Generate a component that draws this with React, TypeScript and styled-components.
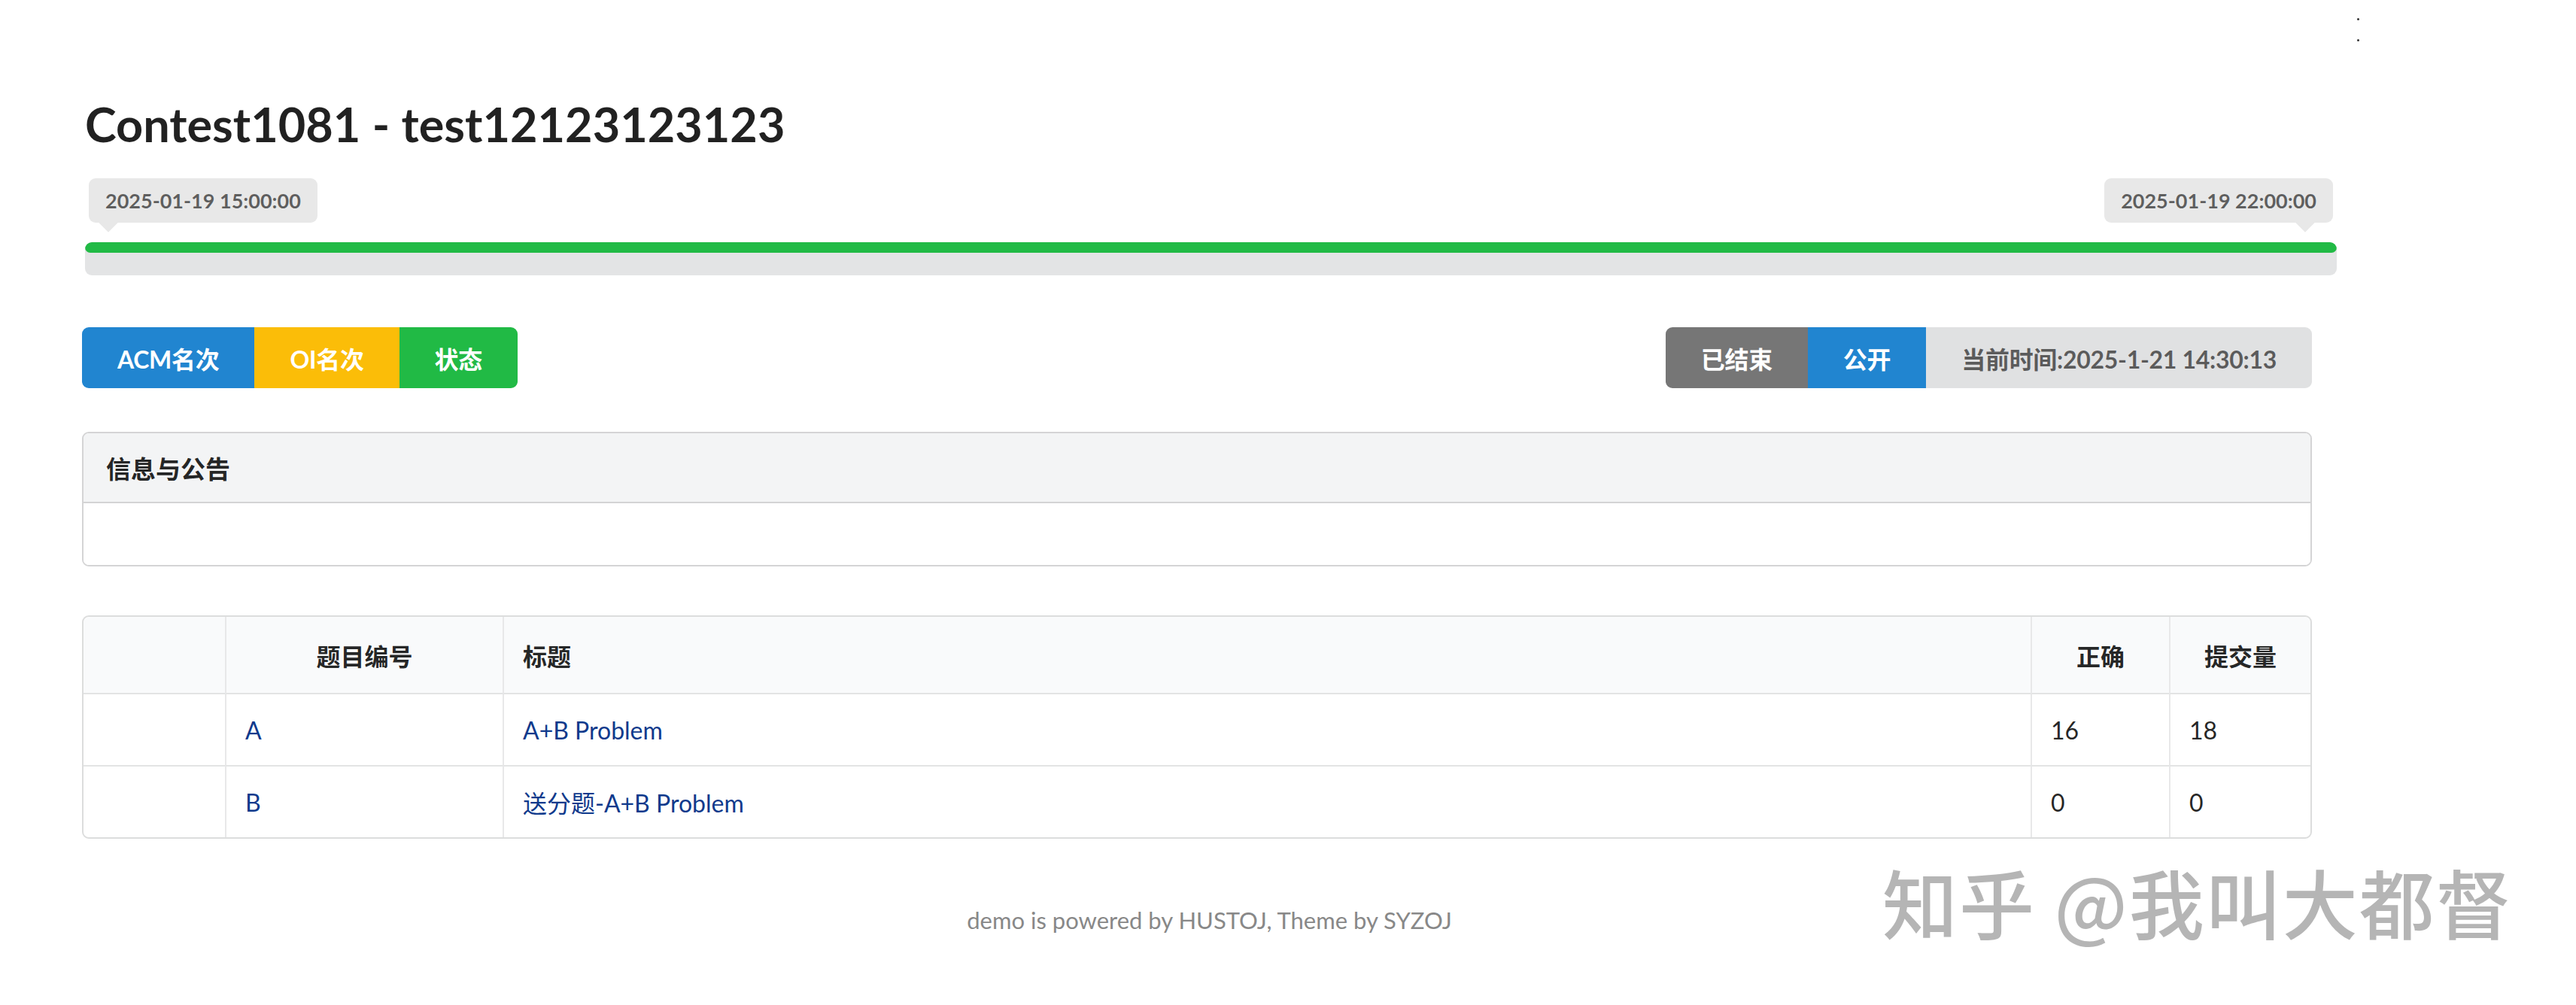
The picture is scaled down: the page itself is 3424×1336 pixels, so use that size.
import styled, { createGlobalStyle } from 'styled-components';

const GlobalStyle = createGlobalStyle`
    html, body {
        margin: 0;
        padding: 0;
        background: #ffffff;
    }

    body {
        font-family: Lato, 'Noto Sans CJK SC', 'Noto Sans', sans-serif;
        font-size: 32px;
        color: rgba(0, 0, 0, 0.87);
    }
`;

type Problem = {
    id: string;
    title: string;
    accepted: number;
    submitted: number;
};

const problems: Problem[] = [
    { id: 'A', title: 'A+B Problem', accepted: 16, submitted: 18 },
    { id: 'B', title: '送分题-A+B Problem', accepted: 0, submitted: 0 },
];

const COLORS = {
    blue: '#2185d0',
    yellow: '#fbbd08',
    green: '#21ba45',
    grey: '#767676',
    light: '#e0e1e2',
};

function App(): JSX.Element {
    return (
        <Page>
            <GlobalStyle />
            <Main>
                <Title>Contest1081 - test12123123123</Title>

                <TimeRow>
                    <TimeLabel $arrow="left">2025-01-19 15:00:00</TimeLabel>
                    <TimeLabel $arrow="right">2025-01-19 22:00:00</TimeLabel>
                </TimeRow>

                <Progress>
                    <ProgressBar style={{ width: '100%' }} />
                </Progress>

                <Toolbar>
                    <ButtonGroup>
                        <Button $color={COLORS.blue}>ACM名次</Button>
                        <Button $color={COLORS.yellow}>OI名次</Button>
                        <Button $color={COLORS.green}>状态</Button>
                    </ButtonGroup>
                    <ButtonGroup>
                        <Button $color={COLORS.grey}>已结束</Button>
                        <Button $color={COLORS.blue}>公开</Button>
                        <Button $color={COLORS.light} $dark>
                            当前时间:2025-1-21 14:30:13
                        </Button>
                    </ButtonGroup>
                </Toolbar>

                <Segment>
                    <SegmentHeader>信息与公告</SegmentHeader>
                    <SegmentBody />
                </Segment>

                <Table>
                    <colgroup>
                        <col style={{ width: 188 }} />
                        <col style={{ width: 369 }} />
                        <col />
                        <col style={{ width: 184 }} />
                        <col style={{ width: 188 }} />
                    </colgroup>
                    <thead>
                        <tr>
                            <Th />
                            <Th $center>题目编号</Th>
                            <Th>标题</Th>
                            <Th $center>正确</Th>
                            <Th $center>提交量</Th>
                        </tr>
                    </thead>
                    <tbody>
                        {problems.map((problem) => (
                            <tr key={problem.id}>
                                <Td />
                                <Td>
                                    <ProblemLink href="#">{problem.id}</ProblemLink>
                                </Td>
                                <Td>
                                    <ProblemLink href="#">{problem.title}</ProblemLink>
                                </Td>
                                <Td>{problem.accepted}</Td>
                                <Td>{problem.submitted}</Td>
                            </tr>
                        ))}
                    </tbody>
                </Table>

                <Footer>demo is powered by HUSTOJ, Theme by SYZOJ</Footer>
            </Main>

            <Dots>
                <span />
                <span />
            </Dots>
            <Watermark>知乎 @我叫大都督</Watermark>
        </Page>
    );
}

export default App;

const Page = styled.div`
    position: relative;
    width: 3424px;
    min-height: 1336px;
    overflow: hidden;
`;

const Main = styled.div`
    width: 2997px;
    margin-left: 109px;
    padding-top: 124px;
    display: flex;
    flex-direction: column;
`;

const Title = styled.h1`
    margin: 0 0 0 4px;
    font-size: 63px;
    font-weight: 700;
    line-height: 82px;
    color: rgba(0, 0, 0, 0.87);
`;

const TimeRow = styled.div`
    display: flex;
    justify-content: space-between;
    align-items: flex-start;
    margin: 31px 5px 0 9px;
`;

const TimeLabel = styled.div<{ $arrow: 'left' | 'right' }>`
    position: relative;
    box-sizing: border-box;
    height: 59px;
    padding: 0 22px;
    display: flex;
    align-items: center;
    background: #e8e8e8;
    border-radius: 9px;
    color: rgba(0, 0, 0, 0.6);
    font-size: 27px;
    font-weight: 700;
    line-height: 1;

    &::after {
        content: '';
        position: absolute;
        bottom: -9px;
        ${(props) => (props.$arrow === 'left' ? 'left: 17px;' : 'right: 28px;')}
        width: 18px;
        height: 18px;
        background: #e8e8e8;
        transform: rotate(45deg);
    }
`;

const Progress = styled.div`
    margin: 26px 0 0 4px;
    height: 44px;
    background: #e3e4e5;
    border-radius: 9px;
    overflow: hidden;
`;

const ProgressBar = styled.div`
    height: 14px;
    background: #21ba45;
    border-radius: 7px;
`;

const Toolbar = styled.div`
    display: flex;
    justify-content: space-between;
    margin: 69px 33px 0 0;
`;

const ButtonGroup = styled.div`
    display: flex;
    border-radius: 9px;
    overflow: hidden;
`;

const Button = styled.div<{ $color: string; $dark?: boolean }>`
    box-sizing: border-box;
    height: 81px;
    padding: 0 47px;
    display: flex;
    align-items: center;
    background: ${(props) => props.$color};
    color: ${(props) => (props.$dark ? 'rgba(0, 0, 0, 0.6)' : '#ffffff')};
    font-size: 32px;
    font-weight: 700;
    letter-spacing: -0.3px;
    white-space: nowrap;
    cursor: pointer;
`;

const Segment = styled.div`
    margin: 58px 33px 0 0;
    border: 2px solid #d4d4d5;
    border-radius: 9px;
    overflow: hidden;
`;

const SegmentHeader = styled.div`
    box-sizing: border-box;
    height: 93px;
    padding: 0 30px;
    display: flex;
    align-items: center;
    background: #f3f4f5;
    border-bottom: 2px solid #d4d4d5;
    font-size: 33px;
    font-weight: 700;
    color: rgba(0, 0, 0, 0.87);
`;

const SegmentBody = styled.div`
    height: 82px;
    background: #ffffff;
`;

const Table = styled.table`
    margin: 65px 33px 0 0;
    width: 2964px;
    table-layout: fixed;
    border-collapse: separate;
    border-spacing: 0;
    border: 2px solid #dcdddd;
    border-radius: 9px;
    font-size: 32px;
`;

const Th = styled.th<{ $center?: boolean }>`
    height: 101px;
    padding: 0 25px;
    background: #f9fafb;
    text-align: ${(props) => (props.$center ? 'center' : 'left')};
    font-weight: 700;
    color: rgba(0, 0, 0, 0.87);
    border-bottom: 2px solid #e3e4e4;

    & + & {
        border-left: 2px solid #e8e8e9;
    }

    &:first-child {
        border-top-left-radius: 9px;
    }

    &:last-child {
        border-top-right-radius: 9px;
    }
`;

const Td = styled.td`
    height: 94px;
    padding: 0 25px;
    color: rgba(0, 0, 0, 0.87);
    font-weight: 400;

    & + & {
        border-left: 2px solid #e8e8e9;
    }

    tr + tr > & {
        border-top: 2px solid #e3e4e4;
    }
`;

const ProblemLink = styled.a`
    color: #103a8c;
    text-decoration: none;
`;

const Footer = styled.div`
    margin-top: 85px;
    text-align: center;
    color: #888888;
    font-size: 31px;
    line-height: 46px;
`;

const Watermark = styled.div`
    position: absolute;
    left: 2502px;
    top: 1148px;
    font-family: 'Noto Sans CJK SC', sans-serif;
    font-size: 100px;
    font-weight: 500;
    line-height: 1;
    color: #b5b5b5;
    white-space: nowrap;
    letter-spacing: 2px;
`;

const Dots = styled.div`
    position: absolute;
    left: 3133px;
    top: 24px;
    display: flex;
    flex-direction: column;
    gap: 25px;

    & span {
        width: 3px;
        height: 3px;
        border-radius: 50%;
        background: #333333;
    }
`;
